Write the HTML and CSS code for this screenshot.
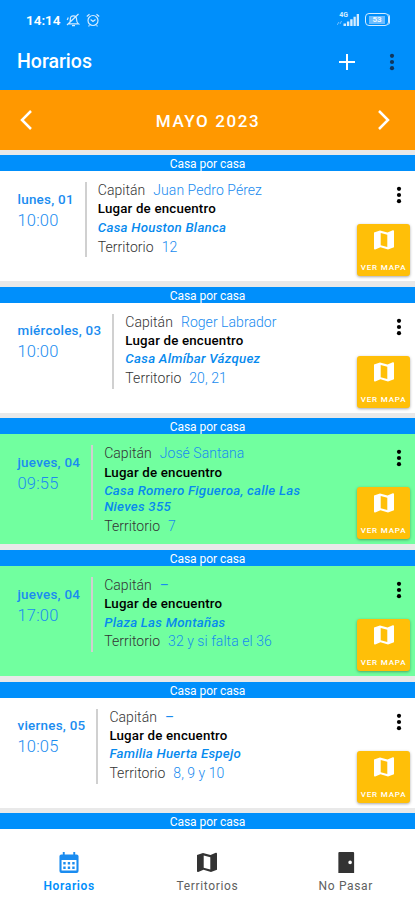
FILE: index.html
```html
<!DOCTYPE html>
<html lang="es">
<head>
<meta charset="utf-8">
<title>Horarios</title>
<link rel="stylesheet" href="styles.css">
</head>
<body>
<svg class="defs" width="0" height="0">
  <symbol id="map" viewBox="0 0 20 20"><path fill-rule="evenodd" d="M0 2.5 6 .4 13.5 2.4 18.8.3Q20 0 20 1.2V17.2L14 19.4 6.5 17.3 1.2 19.5Q0 19.8 0 18.6ZM6.7 2.9V15.2L13.3 17V4.7Z"/></symbol>
  <symbol id="dots" viewBox="0 0 6 18"><circle cx="3" cy="2.8" r="2.1"/><circle cx="3" cy="9" r="2.1"/><circle cx="3" cy="15.2" r="2.1"/></symbol>
</svg>
<div class="screen">
  <header class="top">
    <div class="status">
      <span class="clock">14:14</span>
      <svg class="bell" viewBox="0 0 14 14"><path d="M3 10.5Q4.3 9.5 4.3 6.5 4.3 2.8 7.4 2.8T10.6 6.5Q10.6 9.5 12.3 10.8H3ZM6 12.7H9M1 12 12.5 1M1.2 7 2.3 4.5"/></svg>
      <svg class="alarm" viewBox="0 0 14 14"><circle cx="7" cy="7.5" r="5"/><path d="M.8 3.5 3.5 1.2M10.5 1.2 13.2 3.5M4.6 6.5 7 8.5 9.5 6.5M3.5 12.3 2.5 13.3M10.5 12.3 11.5 13.3"/></svg>
      <span class="net">4G</span>
      <svg class="signal" viewBox="0 0 22 12"><path class="faint" d="M0 11 2 8M3 10 4.5 7"/><path d="M6.5 12V9.5H9V12ZM9.9 12V7.5H12.3V12ZM13.2 12V5.2H15.6V12ZM16.5 12V2.8H18.8V12ZM19.7 12V0H22V12Z"/></svg>
      <span class="battery"><span>53</span></span>
    </div>
    <div class="appbar">
      <h1>Horarios</h1>
      <svg class="plus" viewBox="0 0 16 16"><path d="M8 0V16M0 8H16"/></svg>
      <svg class="dots"><use href="#dots"/></svg>
    </div>
  </header>
  <div class="month">
    <svg viewBox="0 0 14 22"><path d="M12 2 3 11 12 20"/></svg>
    <span>MAYO 2023</span>
    <svg viewBox="0 0 14 22"><path d="M2 2 11 11 2 20"/></svg>
  </div>
  <main class="list">
    <article class="card">
      <div class="kind">Casa por casa</div>
      <div class="body">
        <div class="when"><b>lunes, 01</b><span>10:00</span></div>
        <div class="info">
          <p><span>Capitán</span><em>Juan Pedro Pérez</em></p>
          <p class="label">Lugar de encuentro</p>
          <p class="place">Casa Houston Blanca</p>
          <p><span>Territorio</span><em>12</em></p>
        </div>
        <div class="actions"><svg class="dots"><use href="#dots"/></svg><div class="btn"><svg><use href="#map"/></svg><span>VER MAPA</span></div></div>
      </div>
    </article>
    <article class="card">
      <div class="kind">Casa por casa</div>
      <div class="body">
        <div class="when"><b>miércoles, 03</b><span>10:00</span></div>
        <div class="info">
          <p><span>Capitán</span><em>Roger Labrador</em></p>
          <p class="label">Lugar de encuentro</p>
          <p class="place">Casa Almíbar Vázquez</p>
          <p><span>Territorio</span><em>20, 21</em></p>
        </div>
        <div class="actions"><svg class="dots"><use href="#dots"/></svg><div class="btn"><svg><use href="#map"/></svg><span>VER MAPA</span></div></div>
      </div>
    </article>
    <article class="card green">
      <div class="kind">Casa por casa</div>
      <div class="body">
        <div class="when"><b>jueves, 04</b><span>09:55</span></div>
        <div class="info">
          <p><span>Capitán</span><em>José Santana</em></p>
          <p class="label">Lugar de encuentro</p>
          <p class="place">Casa Romero Figueroa, calle Las<br>Nieves 355</p>
          <p><span>Territorio</span><em>7</em></p>
        </div>
        <div class="actions"><svg class="dots"><use href="#dots"/></svg><div class="btn"><svg><use href="#map"/></svg><span>VER MAPA</span></div></div>
      </div>
    </article>
    <article class="card green">
      <div class="kind">Casa por casa</div>
      <div class="body">
        <div class="when"><b>jueves, 04</b><span>17:00</span></div>
        <div class="info">
          <p><span>Capitán</span><em class="dash">–</em></p>
          <p class="label">Lugar de encuentro</p>
          <p class="place">Plaza Las Montañas</p>
          <p><span>Territorio</span><em>32 y si falta el 36</em></p>
        </div>
        <div class="actions"><svg class="dots"><use href="#dots"/></svg><div class="btn"><svg><use href="#map"/></svg><span>VER MAPA</span></div></div>
      </div>
    </article>
    <article class="card">
      <div class="kind">Casa por casa</div>
      <div class="body">
        <div class="when"><b>viernes, 05</b><span>10:05</span></div>
        <div class="info">
          <p><span>Capitán</span><em class="dash">–</em></p>
          <p class="label">Lugar de encuentro</p>
          <p class="place">Familia Huerta Espejo</p>
          <p><span>Territorio</span><em>8, 9 y 10</em></p>
        </div>
        <div class="actions"><svg class="dots"><use href="#dots"/></svg><div class="btn"><svg><use href="#map"/></svg><span>VER MAPA</span></div></div>
      </div>
    </article>
    <article class="card">
      <div class="kind">Casa por casa</div>
    </article>
  </main>
  <nav class="tabs">
    <div class="tab active">
      <svg viewBox="0 0 20 22"><path fill-rule="evenodd" d="M3.5 0H5.5V2.5H14.5V0H16.5V2.5H18Q20 2.5 20 4.5V20Q20 22 18 22H2Q0 22 0 20V4.5Q0 2.5 2 2.5H3.5ZM2.2 8.5V19.5H17.8V8.5Z"/><path d="M4 10.5H6.5V13H4ZM8.7 10.5H11.2V13H8.7ZM13.4 10.5H15.9V13H13.4ZM4 15.2H6.5V17.7H4ZM8.7 15.2H11.2V17.7H8.7ZM13.4 15.2H15.9V17.7H13.4Z"/></svg>
      <span>Horarios</span>
    </div>
    <div class="tab">
      <svg><use href="#map"/></svg>
      <span>Territorios</span>
    </div>
    <div class="tab">
      <svg viewBox="0 0 20 22"><path fill-rule="evenodd" d="M2 1Q2 0 3 0H17.5Q18.5 0 18.5 1V22H2ZM14.3 9A1.9 1.9 0 1 0 14.3 12.8 1.9 1.9 0 1 0 14.3 9Z"/></svg>
      <span>No Pasar</span>
    </div>
  </nav>
</div>
</body>
</html>
```
FILE: styles.css
```css
* { box-sizing: border-box; }
body { margin: 0; font-family: Roboto, "Liberation Sans", sans-serif; }
h1, p { margin: 0; }
svg { display: block; flex: none; }
.defs { position: absolute; }
.screen { width: 415px; height: 900px; display: flex; flex-direction: column; overflow: hidden; background: #e9e9e9; }
.top { height: 90px; flex: none; background: #008ffb; color: #fff; }
.status { height: 39px; padding: 0 24px 0 26px; display: flex; align-items: center; }
.clock { width: 40px; font-size: 13.5px; font-weight: 600; letter-spacing: 0; line-height: 14px; margin-top: 1px; }
.bell, .alarm { width: 14px; height: 14px; fill: none; stroke: #d4ecff; stroke-width: 1.2; }
.alarm { margin-left: 6px; }
.net { margin-left: auto; margin-right: -11px; align-self: flex-start; margin-top: 12px; font-size: 7px; line-height: 7px; font-weight: 700; color: #d4ecff; }
.signal { width: 22px; height: 12px; fill: #d4ecff; margin-right: 6px; }
.faint { stroke: #72bfff; fill: none; }
.battery { width: 24px; height: 13px; border: 1.5px solid #d4ecff; border-radius: 4px; display: flex; align-items: center; justify-content: center; margin-right: 2px; box-shadow: 2px 0 0 -1px #d4ecff; }
.battery span { font-size: 8px; line-height: 8px; font-weight: 700; background: #6bbcff; padding: 0 3px; color: #eef8ff; }
.appbar { height: 45px; padding: 0 20px 0 17px; display: flex; align-items: center; }
h1 { font-size: 19.5px; font-weight: 500; line-height: 24px; letter-spacing: 0; }
.plus { width: 16px; height: 16px; margin-left: auto; margin-right: 34px; fill: none; stroke: #fff; stroke-width: 2; }
.dots { width: 6px; height: 18px; fill: #000; }
.appbar .dots { fill: #10365c; }
.month { height: 59.5px; flex: none; background: #ff9800; color: #fff; display: flex; align-items: center; justify-content: space-between; padding: 0 24px 0 19px; font-size: 17px; font-weight: 500; letter-spacing: 1.6px; }
.month span { padding-left: 6px; padding-top: 2px; }
.month svg { width: 14px; height: 22px; fill: none; stroke: #fff; stroke-width: 2.5; }
.list { flex: 1; min-height: 0; padding-top: 5.8px; display: flex; flex-direction: column; gap: 5.6px; overflow: hidden; }
.card { height: 126px; flex: none; background: #fff; }
.green { background: #71ff9f; }
.kind { height: 16px; background: #008ffb; color: #fff; text-align: center; font-size: 12px; line-height: 18px; letter-spacing: -.05px; }
.body { height: 110px; display: flex; padding: 11px 5px 0 17.5px; }
.when { height: 75px; padding: 9.5px 11px 0 0; border-right: 2px solid #d0d0d0; color: #1a8cf0; display: flex; flex-direction: column; }
.when b { font-size: 13.4px; line-height: 16px; font-weight: 500; letter-spacing: .26px; white-space: nowrap; }
.when span { font-size: 16.5px; line-height: 20px; margin-top: 3px; letter-spacing: .2px; font-weight: 300; }
.info { margin-left: 11px; flex: 1; font-size: 14px; line-height: 16px; letter-spacing: .05px; color: #333; white-space: nowrap; font-weight: 300; }
.info p { margin-bottom: 2.8px; }
.info em { font-style: normal; color: #188bef; margin-left: 8px; }
.info .dash { font-weight: 400; }
.info .label { color: #000; font-weight: 500; font-size: 13.3px; padding-top: .4px; margin-bottom: 2.4px; letter-spacing: .18px; }
.info .place { color: #078aee; font-weight: 500; font-style: italic; font-size: 13.3px; letter-spacing: .25px; }
.actions { width: 53px; display: flex; flex-direction: column; align-items: center; }
.actions .dots { align-self: flex-start; margin: 4px 0 0 39px; }
.btn { width: 53px; height: 52px; margin-top: 20px; border-radius: 3px; background: #ffbf08; color: #fff; display: flex; flex-direction: column; align-items: center; padding-top: 6px; box-shadow: 0 1px 3px rgba(0,0,0,.35); }
.btn svg { width: 20px; height: 20px; fill: #fff; }
.btn span { margin-top: 13px; font-size: 8px; line-height: 10px; font-weight: 500; letter-spacing: .85px; white-space: nowrap; }
.tabs { height: 70.5px; flex: none; background: #fff; display: flex; }
.tab { flex: 1; display: flex; flex-direction: column; align-items: center; padding-top: 22px; color: #606060; font-size: 12px; letter-spacing: .65px; }
.tab svg { width: 20px; height: 21px; fill: #333; }
.tab span { margin-top: 6px; line-height: 14px; }
.tab.active { color: #008ffb; font-weight: 600; }
.tab.active svg { fill: #1a8cf0; }
```
